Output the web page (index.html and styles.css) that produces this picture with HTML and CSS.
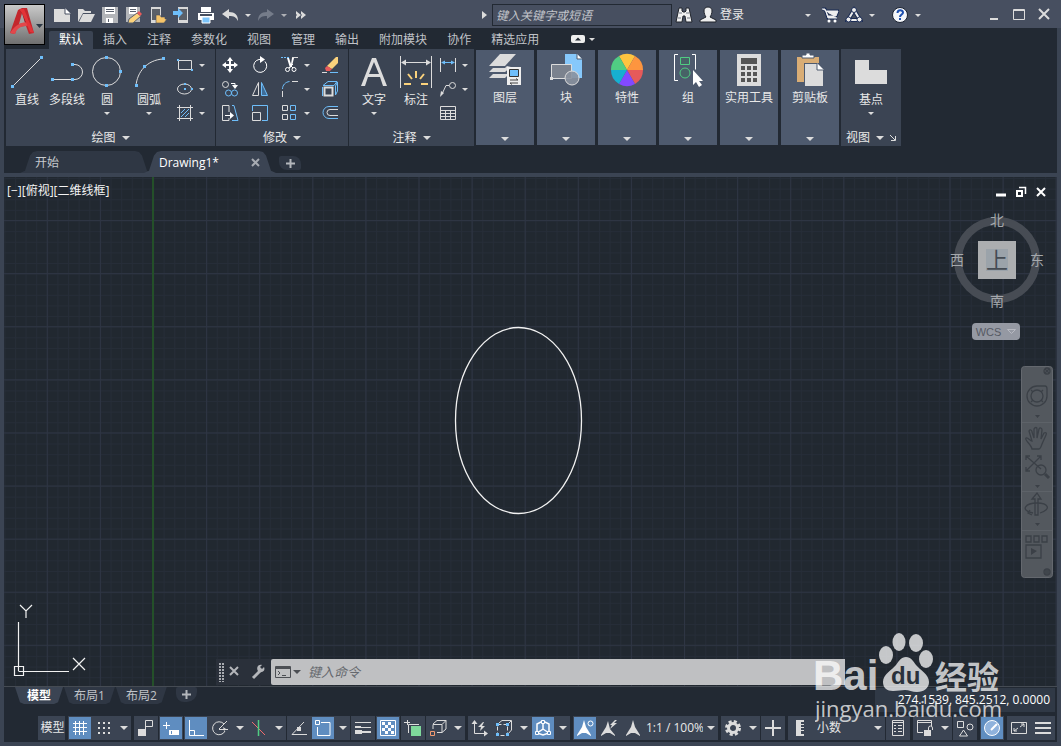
FILE: index.html
```html
<!DOCTYPE html>
<html lang="zh-CN">
<head>
<meta charset="utf-8">
<title>Drawing1</title>
<link rel="stylesheet" href="styles.css">
</head>
<body>
<div class="app">
  <header class="titlebar">
    <button class="app-btn" aria-label="应用程序菜单">
      <svg width="38" height="38" viewBox="0 0 38 38"><path d="M4 27 12 4l4-2h5l7 25-5 1-3-8-9 1-2 7z" fill="#c3272d"/><path d="m13 4 3 3-3 13 10-3 4 10-5-15z" fill="#8f171c"/><path d="m16 7 3 10-6 1z" fill="#a5a5a5"/><path d="M4 27C9 19 15 16 23 16l1 4c-8-1-13 2-15 8z" fill="#e2474b"/><path d="M13 3h5l5 12 5 12-4-1-8-19z" fill="#e23338"/><path d="M30 18h7l-3.500 4z" fill="#2c3744"/></svg>
    </button>
    <nav class="quick" aria-label="快速访问">
      <button aria-label="新建"><svg width="18" height="18"><path class="fl" d="M1 3h11l5 5v8H1z"/><path d="M12 2v6h6" fill="#fff" stroke="#474f60"/></svg></button>
      <button aria-label="打开"><svg width="18" height="18"><path class="fl" d="M1 16V3h5l2 2h6v2H6z"/><path class="fl" d="M6 8h12l-4 8H2z"/></svg></button>
      <button aria-label="保存"><svg width="18" height="18"><path d="M1 1h16v16H1z" fill="#b3b5b9"/><path fill="#fff" d="M4 1h10v7H4zM5 12h7v5H5z"/><path d="M5 3.500h8M5 5.500h8M7.500 13v3" stroke="#59606d"/></svg></button>
      <button aria-label="另存为"><svg width="18" height="18"><path d="M1 1h14v15H1z" fill="#b3b5b9"/><path fill="#fff" d="M4 1h8v7H4z"/><path d="M5 3.500h6M5 5.500h6" stroke="#59606d"/><path d="m3 17 1-4 8-6 4 3-8 7z" fill="#fbd27c" stroke="#59606d"/><path d="m12 7 2-2 3 3-2 2z" fill="#e95b5b"/></svg></button>
      <button aria-label="从移动设备打开"><svg width="18" height="18"><path d="M2 1h10v16H2z" fill="#d8d8d8"/><path d="M3 3h8v11H3z" fill="#5b6068"/><path d="M7 17V9h4l1 2h4v2h2l-3 4z" fill="#f6c469" stroke="#474f60" stroke-width=".6"/></svg></button>
      <button aria-label="保存到移动设备"><svg width="18" height="18"><path d="M5 1h10v16H5z" fill="#d8d8d8"/><path d="M6 3h8v11H6z" fill="#5b6068"/><path d="M0 5h5V2l5 5-5 5V9H0z" fill="#6ebefa"/></svg></button>
      <button aria-label="打印"><svg width="18" height="18"><path d="M4 1h10v5H4z" fill="#fff"/><path d="M1 7h16v7H1z" fill="#fff"/><path d="M3 9h12" stroke="#474f60" stroke-width="2"/><path d="M5 11h8v6H5z" fill="#7cc4fb" stroke="#fff"/></svg></button>
      <button aria-label="放弃"><svg width="18" height="18"><path class="fl" d="M1 8l7-5v3c6 0 9 3 9 9-2-4-4-5-9-5v3z"/></svg></button>
      <button class="slim" aria-label="放弃列表"><i class="arrow sm"></i></button>
      <button aria-label="重做"><svg width="18" height="18"><path fill="#757c8a" d="M17 8l-7-5v3C4 6 1 9 1 15c2-4 4-5 9-5v3z"/></svg></button>
      <button class="slim dim" aria-label="重做列表"><i class="arrow sm"></i></button>
      <button aria-label="更多"><svg width="18" height="18"><path d="M3 5l5 4-5 4v-3l1-1-1-1zM8 5l5 4-5 4v-3l1-1-1-1z" class="fl"/></svg></button>
    </nav>
    <form class="search">
      <svg width="8" height="10"><path class="fl" d="M2 1l5 4-5 4z"/></svg>
      <input type="text" placeholder="键入关键字或短语" aria-label="键入关键字或短语">
      <button type="button" aria-label="搜索"><svg width="18" height="18"><path d="M4 2h3v3l1 1h2l1-1V2h3l3 14h-6l-1-6H8l-1 6H1z" fill="#f0f0f0" stroke="#20242c"/><path d="M4 7h3M11 7h3M3 12h3M12 12h3" stroke="#737984"/></svg></button>
    </form>
    <div class="account">
      <button class="login"><svg width="18" height="18"><path d="M9 1c3 0 4 2 4 4s-1 5-2 6l6 3v2H1v-2l6-3C6 10 5 7 5 5s1-4 4-4z" fill="#eee" stroke="#20242c"/></svg><span>登录</span><i class="arrow sm"></i></button>
      <button aria-label="商店"><svg width="18" height="18"><path d="M1 3h3l3 9h9M5 5h12l-2 5H7" fill="#eee" stroke="#1b2c55" stroke-width="3"/><path d="M1 3h3l3 9h9M5 5h12l-2 5H7z" fill="#eee" stroke="#eee"/><circle cx="8" cy="15" r="1.500" fill="#fff"/><circle cx="14" cy="15" r="1.500" fill="#fff"/></svg></button>
      <button aria-label="应用商店"><svg width="18" height="18"><path d="M9 4 3 14h12z" fill="none" stroke="#1b2c55" stroke-width="4"/><path d="M9 4 3 14h12z" fill="none" stroke="#eee" stroke-width="2"/><g fill="#eee" stroke="#1b2c55"><circle cx="9" cy="4" r="2.500"/><circle cx="3.500" cy="13.500" r="2.500"/><circle cx="14.500" cy="13.500" r="2.500"/></g></svg></button>
      <button class="slim" aria-label="应用列表"><i class="arrow sm"></i></button>
      <button aria-label="帮助" class="help"><svg width="18" height="18"><circle cx="9" cy="9" r="7.500" fill="#f4f6fa" stroke="#1b2230"/><path d="M6.500 7c0-3.500 5.500-3.500 5.500-.5C12 8.500 9 8.500 9 11M9 12v2" stroke="#1d4fae" stroke-width="2" fill="none"/></svg></button>
      <button class="slim" aria-label="帮助列表"><i class="arrow sm"></i></button>
    </div>
    <div class="winbtns">
      <button aria-label="最小化"><svg width="16" height="16"><path d="M4 12h8" stroke="#dcdcdc" stroke-width="2"/></svg></button>
      <button aria-label="最大化"><svg width="16" height="16"><path d="M2.500 2.500h11v10h-11zM2 3.500h12" stroke="#dcdcdc" fill="none"/></svg></button>
      <button aria-label="关闭"><svg width="16" height="16"><path d="m3 2 10 10M13 2 3 12" stroke="#dcdcdc" stroke-width="2"/></svg></button>
    </div>
  </header>

  <nav class="ribbon-tabs" aria-label="功能区">
    <button class="on">默认</button><button>插入</button><button>注释</button><button>参数化</button><button>视图</button><button>管理</button><button>输出</button><button>附加模块</button><button>协作</button><button>精选应用</button>
    <button class="fold" aria-label="最小化功能区"><svg width="14" height="8"><rect width="14" height="8" rx="2" fill="#eee"/><path d="m4 5.500 3-3 3 3z" fill="#222933"/></svg><i class="arrow sm"></i></button>
  </nav>

  <section class="ribbon">
    <div class="panel">
      <div class="tools draw">
        <button class="big"><svg width="32" height="32"><path class="l" d="M2 30 30 2"/><path class="fb" d="M0 29h3v3H0zM29 0h3v3h-3z"/></svg><span>直线</span></button>
        <button class="big poly"><svg width="32" height="32"><path class="l" d="M2 23.500h19M21 8.500h3a7 7 0 0 1 0 15h-3"/><path class="fb" d="M0 22h3v3H0zM20 22h3v3h-3zM20 7h3v3h-3z"/></svg><span>多段线</span></button>
        <button class="big"><svg width="32" height="32"><circle class="l" cx="15.500" cy="15.500" r="14"/><path class="fb" d="M14 0h3v3h-3zM14 28h3v3h-3zM28 14h3v3h-3z"/></svg><span>圆</span><i class="arrow sm"></i></button>
        <button class="big"><svg width="32" height="32"><path class="l" d="M3 30C4 16 14 4 30 3"/><path class="fb" d="M2 28h3v3H2zM10 9h3v3h-3zM29 1h3v3h-3z"/></svg><span>圆弧</span><i class="arrow sm"></i></button>
        <div class="col">
          <button class="small" aria-label="矩形"><svg width="18" height="18"><path class="l" d="M2.500 4.500h13v9h-13z"/><path class="fb" d="M1 3h2v2H1zM15 13h2v2h-2z"/></svg><i class="arrow sm"></i></button>
          <button class="small" aria-label="椭圆"><svg width="18" height="18"><ellipse class="l" cx="8.500" cy="9" rx="7" ry="5"/><path class="fb" d="M8 3h2v2H8zM8 8h2v2H8zM15 8h2v2h-2z"/></svg><i class="arrow sm"></i></button>
          <button class="small" aria-label="图案填充"><svg width="18" height="18"><path class="l" d="M3.500 1v16M14.500 1v16M1 3.500h16M1 14.500h16"/><path class="b" d="m5 9 4-4M5 13l8-8M9 13l4-4"/></svg><i class="arrow sm"></i></button>
        </div>
      </div>
      <button class="ptitle">绘图<i class="arrow"></i></button>
    </div>
    <div class="panel">
      <div class="tools modify">
        <button aria-label="移动"><svg width="18" height="18"><path d="M9 3v12M3 9h12" stroke="#fff" stroke-width="2"/><path fill="#fff" d="m9 1 3 4H6zM9 17l3-4H6zM1 9l4-3v6zM17 9l-4-3v6z"/></svg></button>
        <button aria-label="旋转"><svg width="18" height="18"><path class="w" d="M14 5.500a6.500 6.500 0 1 1-6-2h2"/><path fill="#fff" d="m9 0 5 3.500L9 7z"/></svg></button>
        <button aria-label="修剪"><svg width="18" height="18"><path class="b" stroke-dasharray="2 1" d="M0 1.500h9"/><path class="l" d="M11 1.500h6"/><path fill="#fff" d="M6 2h2l2 6 1-6h2l-2 8-2 2z"/><circle class="w" cx="6.500" cy="13.500" r="2"/><circle class="w" cx="13" cy="13.500" r="2"/><path class="w" d="m8 12 4-4M9 9l3 3"/></svg></button>
        <button class="dd" aria-label="修剪列表"><i class="arrow sm"></i></button>
        <button aria-label="删除"><svg width="18" height="18"><path fill="#fbd27c" d="M17 1v6l-6 6-5-3 9-9z"/><path fill="#e95b5b" d="m6 10 5 3-2 2H5l-1-3z"/><path class="l" d="M1 16.500h5"/><path class="b" d="M9 16.500h8"/></svg></button>
        <button aria-label="复制"><svg width="18" height="18"><circle class="l" cx="4.500" cy="4.500" r="3"/><circle class="b" cx="7.500" cy="13" r="3"/><circle class="b" cx="13.500" cy="13" r="3"/><path class="w" d="M10 3.500h4V6"/><path fill="#fff" d="M11 5h6l-3 4z"/></svg></button>
        <button aria-label="镜像"><svg width="18" height="18"><path class="l" d="M1.500 15.500h6v-13z"/><path d="M10.500 15.500h6l-6-13z" fill="#3f6d98" stroke="#6ebefa"/></svg></button>
        <button aria-label="圆角"><svg width="18" height="18"><path class="b" d="M1.500 9c0-4 3-7 7-7.500"/><path class="l" d="M11 1.500h6M1.500 11v6"/></svg></button>
        <button class="dd" aria-label="圆角列表"><i class="arrow sm"></i></button>
        <button aria-label="分解"><svg width="18" height="18"><path class="l" stroke-width="2" d="M3.500 7.500h8v8h-8z"/><path class="b" d="M2 5.500 7 1.500h9l-3 4zM14.500 6l2-4v9l-2 4zM1.500 7v9"/></svg></button>
        <button aria-label="拉伸"><svg width="18" height="18"><path class="l" d="M8 8V1.500H1.500v15H8V14"/><path class="b" d="M11 1.500h2l4 15h-6"/><path class="w" d="M4 11.500h6"/><path fill="#fff" d="m9 8 4 3.500L9 15z"/></svg></button>
        <button aria-label="缩放"><svg width="18" height="18"><path class="b" d="M1.500 7V1.500h15v15H11"/><path class="l" d="M1.500 8.500h8v8h-8z"/></svg></button>
        <button aria-label="阵列"><svg width="18" height="18"><path class="l" d="M1.500 1.500h5v5h-5zM1.500 10.500h5v5h-5z"/><path class="b" d="M9.500 1.500h5v5h-5zM9.500 10.500h5v5h-5z"/></svg></button>
        <button class="dd" aria-label="阵列列表"><i class="arrow sm"></i></button>
        <button aria-label="偏移"><svg width="18" height="18"><path class="b" d="M17 2.500H8a6 6 0 0 0 0 12h9"/><path class="l" d="M17 5.500H9a3 3 0 0 0 0 6h8"/></svg></button>
      </div>
      <button class="ptitle">修改<i class="arrow"></i></button>
    </div>
    <div class="panel">
      <div class="tools note">
        <button class="big"><svg width="32" height="32"><path class="fl" fill-rule="evenodd" d="M3 30 14 2h4l11 28h-4l-3-9H10l-3 9zM11 18h10L16 6z"/></svg><span>文字</span><i class="arrow sm"></i></button>
        <button class="big"><svg width="32" height="32"><path class="l" d="M.5 0v32M31.500 0v32M2 6.500h28"/><path class="fl" d="m1 6.500 5-3v6zM31 6.500l-5-3v6z"/><path d="M16 15v7M8 18l4 5M24 18l-4 5M4 28h7M21 28h7" stroke="#fbd27c" stroke-width="2"/></svg><span>标注</span></button>
        <div class="col">
          <button class="small" aria-label="线性标注"><svg width="18" height="18"><path class="l" d="M1.500 2v14M16.500 2v14"/><path class="b" d="M3 6.500h12"/><path class="fb" d="m2 6.500 4-2v4zM16 6.500l-4-2v4z"/></svg><i class="arrow sm"></i></button>
          <button class="small" aria-label="引线"><svg width="18" height="18"><circle class="l" cx="13.500" cy="5.500" r="3"/><path class="l" d="M10 5.500H7L3 14"/><path class="fl" d="m1 17 1-6 3 2z"/></svg><i class="arrow sm"></i></button>
          <button class="small" aria-label="表格"><svg width="18" height="18"><path class="l" d="M1.500 2.500h15v13h-15zM1 6.500h16M1 9.500h16M1 12.500h16M6.500 6v10M11.500 6v10"/></svg></button>
        </div>
      </div>
      <button class="ptitle">注释<i class="arrow"></i></button>
    </div>
    <div class="blocks">
      <button class="block"><svg width="34" height="34"><g class="fl"><path d="M12 1h16L17 13H1z"/><path d="m5 15-4 4h16l6-5-4-1-2 2z"/><path d="m5 21-4 4h16l2-2v-2z"/></g><path d="M19 14h14v18H19z" fill="#eee"/><path d="M21.500 16.500h9v7h-9z" fill="#6ebefa" stroke="#333"/><path d="M22 27h8l-2-1.500M30 30h-8l2 1.500" stroke="#444" fill="none"/></svg><span>图层</span><i class="arrow"></i></button>
      <button class="block"><svg width="34" height="34"><path d="M16 1h12l5 5v19H16z" fill="#86c8fb"/><path d="M28 1v5h5" fill="#fff" stroke="#4e5a6e"/><path d="M2.500 11.500h20v14h-20z" fill="#7b828e" stroke="#dcdcdc"/><circle cx="23" cy="25" r="7" fill="#89919e" fill-opacity=".9" stroke="#dcdcdc"/><path class="fl" d="M1 24h3v3H1z"/></svg><span>块</span><i class="arrow"></i></button>
      <button class="block"><svg width="34" height="34" viewBox="-17 -17 34 34"><path d="M0 0-8-13.900A16 16 0 0 1 8-13.900z" fill="#fec440"/><path d="M0 0 8-13.900A16 16 0 0 1 16 0z" fill="#fd953f"/><path d="M0 0h16A16 16 0 0 1 8 13.900z" fill="#e65a5a"/><path d="m0 0 8 13.900A16 16 0 0 1-8 13.900z" fill="#8349ff"/><path d="m0 0-8 13.900A16 16 0 0 1-16 0z" fill="#16b0d1"/><path d="M0 0h-16A16 16 0 0 1-8-13.900z" fill="#50cd83"/></svg><span>特性</span><i class="arrow"></i></button>
      <button class="block"><svg width="34" height="34"><path class="w" d="M7 1.500H3.500v26H7M21 1.500h3.500v15"/><path d="M9.500 4.500h9v7h-9z" stroke="#50cd83" fill="#476266"/><circle cx="14" cy="20" r="5" stroke="#50cd83" fill="#476266"/><path d="M22 17v15l3-3 3 5 3-2-3-4h4z" fill="#fff"/></svg><span>组</span><i class="arrow"></i></button>
      <button class="block"><svg width="34" height="34"><path class="fl" d="M5 1h24v32H5z"/><path fill="#555" d="M9 5h16v6H9zM9 13h4v4H9zM15 13h4v4h-4zM21 13h4v4h-4zM9 19h4v4H9zM15 19h4v4h-4zM21 19h4v4h-4zM9 25h4v4H9zM15 25h4v4h-4zM21 25h4v4h-4z"/></svg><span>实用工具</span><i class="arrow"></i></button>
      <button class="block"><svg width="34" height="34"><path fill="#d9ad75" d="M4 4h22v6H11v19H4z"/><path d="M9 5V2h4V0h4v2h4v3z" fill="#fff" stroke="#4e5a6e"/><path class="fl" d="M12 11h12l6 6v16H12z"/><path d="M24 10v7h7" fill="#fff" stroke="#4e5a6e"/></svg><span>剪贴板</span><i class="arrow"></i></button>
    </div>
    <div class="panel">
      <div class="tools view">
        <button class="big"><svg width="32" height="32"><path class="fl" d="M0 4h14v10h18v14H0z"/></svg><span>基点</span><i class="arrow sm"></i></button>
      </div>
      <button class="ptitle">视图<i class="arrow"></i><svg width="6" height="6"><path d="m0 0 5 5M5.500 1v4.500H1" stroke="#dcdcdc" fill="none"/></svg></button>
    </div>
  </section>

  <nav class="doc-tabs" aria-label="图形">
    <button class="doc">开始</button>
    <button class="doc on">Drawing1*<svg width="10" height="10"><path d="m1 1 7 7M8 1 1 8" stroke="#a7abb2" stroke-width="2"/></svg></button>
    <button class="add" aria-label="新图形"><svg width="9" height="9"><path d="M4.500 0v9M0 4.500h9" stroke="#b4b7bc" stroke-width="2"/></svg></button>
  </nav>

  <main class="canvas">
    <svg class="grid" width="100%" height="100%">
      <defs>
        <pattern id="minor" x="149" y="43.500" width="10.620" height="10.620" patternUnits="userSpaceOnUse"><path d="M.5 0v10.620M0 .5h10.620" stroke="#262d38" fill="none"/></pattern>
        <pattern id="major" x="149" y="43" width="53.100" height="53.100" patternUnits="userSpaceOnUse"><path d="M.5 0v53.100M0 .5h53.100" stroke="#2e3543" fill="none"/></pattern>
      </defs>
      <rect width="100%" height="100%" fill="url(#minor)"/>
      <rect width="100%" height="100%" fill="url(#major)"/>
      <path d="M149 0v3000" stroke="#245029" stroke-width="2"/>
      <ellipse cx="514.500" cy="243.500" rx="63" ry="93" fill="none" stroke="#f2f2f2" stroke-width="1.300"/>
    </svg>
    <div class="vp-label">[−][俯视][二维线框]</div>
    <div class="vp-btns">
      <button aria-label="最小化视口"><svg width="12" height="12"><path d="M1 9h10" stroke="#fff" stroke-width="3"/></svg></button>
      <button aria-label="还原视口"><svg width="12" height="12"><path d="M2 5h5v5H2z" stroke="#fff" stroke-width="2" fill="none"/><path d="M4 1.500h6.500V8" stroke="#fff" stroke-width="1.500" fill="none"/></svg></button>
      <button aria-label="关闭视口"><svg width="12" height="12"><path d="m2 2 8 8M10 2l-8 8" stroke="#fff" stroke-width="2"/></svg></button>
    </div>
    <svg class="cube" width="110" height="110">
      <circle cx="55" cy="55" r="39" fill="none" stroke="#474c54" stroke-width="8"/>
      <path d="M36 36h38v38H36z" fill="#acaeb0"/><path d="M44 44h22v22H44z" fill="#9ba3aa"/>
      <g text-anchor="middle"><text x="55" y="63" class="top">上</text><text x="55" y="20">北</text><text x="55" y="101">南</text><text x="15" y="60">西</text><text x="95" y="60">东</text></g>
    </svg>
    <button class="wcs">WCS<svg width="9" height="6"><path d="M.5.5h8l-4 4z" fill="none" stroke="#b8bac2"/></svg></button>
    <svg class="navbar" width="32" height="212">
      <rect x=".5" y=".5" width="31" height="211" rx="3" fill="#53585e" stroke="#64686e"/>
      <path d="M1 56.500h30M1 125.500h30M1 164.500h30" stroke="#5d6268"/>
      <g fill="none" stroke="#3b4047" stroke-width="1.300">
        <circle cx="26" cy="5" r="3"/><path d="m24 3 4 4M28 3l-4 4"/><circle cx="26" cy="206" r="3"/><path d="M24 205h4M24 207h4"/>
        <path d="M16 20h8q2 0 2 3v7a10 10 0 1 1-10-10z"/><circle cx="16" cy="30" r="6"/><path d="m10 24 2 2M22 24l-2 2M10 36l2-2M22 36l-2-2"/>
        <path d="M11 83c-1-5-8-9-6-11 2-1 4 3 6 3L8 65c1-2 3-1 3 1l2 6V63c1-2 3-2 3 0v9l2-9c1-2 3-1 3 1l-1 9 3-6c2-1 3 0 2 2l-4 9c-1 3-2 5-3 5z"/>
        <path d="m5 90 15 13M20 90 5 105M5 94v-4h4M16 90h4v4M5 101v4h4"/><circle cx="20" cy="104" r="5"/><path d="m24 108 4 4" stroke-width="3"/>
        <path d="M14 149v-16h-3l5-6 4 6h-3v16z"/><path d="M12 147c-14-3-7-10 4-10s15 6 3 10"/><path d="m9 144-2 3 4 2"/>
        <path d="M5 170h5v6H5zM13 170h5v6h-5zM21 170h5v6h-5zM5 179h15v13H5z"/>
      </g>
      <path fill="#3b4047" d="M14 49h5l-2.500 3zM14 119h5l-2.500 3zM14 157h5l-2.500 3zM10 182l6 3-6 4z"/>
    </svg>
    <svg class="ucs" width="80" height="80">
      <path d="M9.500 66V17M9.500 66.500H60M5.500 61.500h9v9h-9zM64 53l12 12M76 53 64 65M11 0l6 6 6-6M17 6v7" fill="none" stroke="#f2f2f2" stroke-width="1.200"/>
    </svg>
    <div class="cmd">
      <svg width="55" height="26"><path d="M4 4v19M7 4v19" stroke="#a8abb0" stroke-width="2" stroke-dasharray="2 1"/><path d="m14 8 8 8M22 8l-8 8" stroke="#b4b6ba" stroke-width="2"/><path d="m37 19 8-8" stroke="#b4b6ba" stroke-width="3"/><path d="M48 8l-2 2-2-2 2-2c-4-1-6 3-4 6 3 3 8 0 6-4z" fill="#b4b6ba"/></svg>
      <label class="cmd-box"><svg width="28" height="14"><path d="M1.500 1.500h15v11h-15z" fill="none" stroke="#4c4f54"/><path d="M1 3h16" stroke="#4c4f54" stroke-width="2"/><path d="m4 6 2 2-2 2M8 10.500h4" fill="none" stroke="#4c4f54"/><path d="M19 5h8l-4 4z" fill="#4c4f54"/></svg><input type="text" placeholder="键入命令" aria-label="键入命令"></label>
    </div>
  </main>

  <section class="layouts">
    <div class="layout-tabs"><button class="on">模型</button><button>布局1</button><button>布局2</button><button class="add" aria-label="新建布局"><svg width="9" height="9"><path d="M4.500 0v9M0 4.500h9" stroke="#b4b7bc" stroke-width="2"/></svg></button></div>
    <output class="coords">274.1539, 845.2512, 0.0000</output>
  </section>

  <footer class="status">
    <div class="grp"><button class="txt model">模型</button></div>
    <div class="grp"><div class="seg">
      <button class="on" aria-label="栅格"><svg width="18" height="18"><path class="w" d="M4.500 2v14M8.500 2v14M12.500 2v14M2 4.500h14M2 8.500h14M2 12.500h14"/></svg></button>
      <button aria-label="捕捉"><svg width="18" height="18"><path class="l2" stroke-dasharray="2 3" d="M3 4h13M3 9h13M3 14h13"/></svg></button><button class="dd" aria-label="捕捉设置"><i class="arrow"></i></button></div></div>
    <div class="grp">
      <div class="seg"><button aria-label="推断约束"><svg width="18" height="18"><path class="l" d="M8.500 10V1.500h7v6h-7"/><path class="fl" d="M1 10h8v7H1z"/></svg></button></div>
      <div class="seg"><button class="on" aria-label="动态输入"><svg width="18" height="18"><path class="w" d="M1 6.500h7M4.500 3v7"/><path d="M7 11h10v5H7z" fill="#fff"/><path d="M9.500 12v3" stroke="#5f8dc0"/></svg></button></div>
      <div class="seg"><button class="on" aria-label="正交"><svg width="18" height="18"><path class="w" d="M2.500 1v15.500H17M2.500 11.500h5v5"/></svg></button>
      <button aria-label="极轴追踪"><svg width="18" height="18"><path class="l" d="M13 5a6.500 6.500 0 1 0 1 7M8 10.500h9M8 10l8-8"/><path class="fl" d="m12 8 1 4 2-2z"/></svg></button><button class="dd" aria-label="极轴设置"><i class="arrow"></i></button>
      <button aria-label="等轴测"><svg width="18" height="18"><path d="m2 3 13 13" stroke="#f06c6c"/><path d="M8.500 1v16" stroke="#50cd83" stroke-width="1.500"/></svg></button><button class="dd" aria-label="等轴测设置"><i class="arrow"></i></button></div>
      <div class="seg"><button aria-label="对象捕捉追踪"><svg width="18" height="18"><path class="l" d="M14 3 2 15.500h15"/><path class="fl" d="M7 8h4v4H7z"/></svg></button>
      <button class="on" aria-label="对象捕捉"><svg width="18" height="18"><path class="w" d="M1.500 1.500h4v4h-4zM7 3.500h9v13H3.500V8"/></svg></button><button class="dd" aria-label="对象捕捉设置"><i class="arrow"></i></button></div>
      <div class="seg"><button aria-label="线宽"><svg width="18" height="18"><path class="l" d="M1 3.500h16M7 8.500h10"/><path class="l2" d="M1 8h6M7 13h10"/><path class="fl" d="M1 11h7v4H1z"/></svg></button></div>
      <div class="seg"><button class="on" aria-label="透明度"><svg width="18" height="18"><path class="w" d="M1.500 1.500h15v15h-15z"/><path fill="#fff" d="M3 3h3v3H3zM9 3h3v3H9zM6 6h3v3H6zM12 6h3v3h-3zM3 9h3v3H3zM9 9h3v3H9zM6 12h3v3H6zM12 12h3v3h-3z"/></svg></button></div>
      <div class="seg"><button aria-label="选择循环"><svg width="18" height="18"><path class="l" d="M0 3.500h6M3.500 1v5M4.500 14V5.500H15"/><path d="M7 7h10v10H7z" fill="#7fd99c"/></svg></button></div>
      <div class="seg"><button aria-label="三维对象捕捉"><svg width="18" height="18"><path class="l" d="M4 10V5.500h9v8H8M4 5l4-3.500h9V10l-4 3.500M13 5.500l4-4"/><path d="M1.500 12.500h4v4h-4z" stroke="#f19a71" fill="none"/></svg></button><button class="dd" aria-label="三维捕捉设置"><i class="arrow"></i></button></div>
    </div>
    <div class="grp"><div class="seg">
      <button aria-label="动态 UCS"><svg width="18" height="18"><path class="l" d="M3.500 3v11.500H15"/><path class="fl" d="m3.500 1 3 4h-6zM17 14.500l-4-3v6zM12 3 7 8h3l-1 4 5-5h-3l2-4z"/></svg></button>
      <button aria-label="选择过滤"><svg width="18" height="18"><path class="l" stroke-dasharray="4 2" d="M2.500 5.500h10v11h-10z"/><path class="l" d="m4 4 3-2.500h9.500V11L13 15M13 5l3-3"/><path class="fb" d="M1 4h3v3H1zM11 4h3v3h-3zM1 14h3v3H1zM11 14h3v3h-3z"/></svg></button><button class="dd" aria-label="过滤设置"><i class="arrow"></i></button>
      <button class="on" aria-label="小控件"><svg width="18" height="18"><path class="w" stroke-width="1.500" d="M9 2 3 5v9l6 2 6-2V5zM9 4v6l-6 4M9 10l6 4"/><path d="M7.500 1.500h3v3h-3zM1.500 12.500h3v3h-3zM13.500 12.500h3v3h-3z" fill="#5f8dc0" stroke="#fff"/></svg></button><button class="dd" aria-label="小控件设置"><i class="arrow"></i></button></div></div>
    <div class="grp"><div class="seg">
      <button class="on" aria-label="注释可见性"><svg width="18" height="18"><path fill="#fff" d="M8 1 6 8l-5 8v1l5-3h4l5 3v-1l-5-8z"/><circle cx="14.500" cy="4.500" r="2.500" class="w"/></svg></button>
      <button aria-label="自动缩放"><svg width="18" height="18"><path class="fl" d="M8 2 6 8l-5 8v1l5-3h4l5 3v-1l-5-6zM15 1l-5 5h2l-2 4 7-6h-3l3-3z"/></svg></button>
      <button aria-label="注释比例"><svg width="18" height="18"><path class="fl" d="M9 1 7 8l-5 8v1l5-3h4l5 3v-1l-5-8z"/></svg></button>
      <button class="txt scale">1:1 / 100%</button><button class="dd" aria-label="比例列表"><i class="arrow"></i></button></div></div>
    <div class="grp">
      <div class="seg"><button aria-label="切换工作空间"><svg width="18" height="18"><circle cx="9" cy="9" r="4.500" fill="none" stroke="#dcdcdc" stroke-width="3"/><circle cx="9" cy="9" r="6.500" fill="none" stroke="#dcdcdc" stroke-width="3" stroke-dasharray="3 2.100"/></svg></button><button class="dd" aria-label="工作空间列表"><i class="arrow"></i></button></div>
      <div class="seg"><button aria-label="注释监视器"><svg width="18" height="18"><path class="l2" d="M9 1v16M1 9h16"/></svg></button></div>
    </div>
    <div class="grp">
      <div class="seg"><button aria-label="单位"><svg width="18" height="18"><path class="fl" d="M5 1h8v2h-3v2h3v1h-3v2h3v1h-3v2h3v1h-3v3h3v2H5z"/></svg></button><button class="txt unit">小数</button><button class="dd" aria-label="单位列表"><i class="arrow"></i></button></div>
      <div class="seg"><button aria-label="快捷特性"><svg width="18" height="18"><path class="l" d="M3.500 1.500h11v15h-11z"/><path class="l" d="M3 3.500h12M5 6.500h2M9 6.500h4M5 9.500h2M9 9.500h4M5 12.500h2M9 12.500h4"/></svg></button></div>
    </div>
    <div class="grp">
      <div class="seg"><button aria-label="锁定界面"><svg width="18" height="18"><path class="l" d="M7 13.500H1.500v-12h14V7M1 3.500h15"/><path class="fl" d="M8 11h7v6H8z"/><path class="l" d="M12.500 11V9a2 2 0 0 1 4 0v2"/></svg></button><button class="dd" aria-label="锁定列表"><i class="arrow"></i></button></div>
      <div class="seg"><button aria-label="隔离对象"><svg width="18" height="18"><path class="l" d="M1.500 2.500h6v6h-6zM7.500 11l4 6h-8z"/><circle class="l" cx="14" cy="8" r="3"/></svg></button></div>
    </div>
    <div class="grp"><div class="seg"><button class="on" aria-label="图形性能"><svg width="18" height="18"><circle cx="9" cy="9" r="7.500" fill="#8fb2dc" stroke="#fff"/><path d="m8 11 6-6" stroke="#fff" stroke-width="2"/></svg></button></div></div>
    <div class="grp"><div class="seg">
      <button aria-label="全屏显示"><svg width="18" height="18"><path class="l" d="M1.500 3.500h15v11h-15zM4 12l4-3M10 8l4-3M4 9v3h3M11 5h3v3"/></svg></button>
      <button aria-label="自定义"><svg width="18" height="18"><path class="l2" d="M1 4h16M1 9h16M1 14h16"/></svg></button></div></div>
  </footer>

  <svg class="brand" width="194" height="94">
    <g fill="#fff" fill-opacity=".74">
      <text x="-2" y="58" class="b1">Bai</text>
      <ellipse cx="71" cy="23" rx="7" ry="9"/><ellipse cx="84" cy="10" rx="6.500" ry="9"/><ellipse cx="101" cy="11" rx="7" ry="9"/><ellipse cx="111" cy="27" rx="7" ry="9"/>
      <path d="M91 25c-5 0-7 4-10 8-4 5-13 9-13 17 0 6 4 9 10 9 5 0 8-1 12-1s7 2 12 2c7 0 12-4 12-10 0-8-9-12-13-17-3-4-5-8-10-8z"/>
      <text x="120" y="57" class="b2">经验</text>
      <text x="0" y="85" class="b3">jingyan.baidu.com</text>
    </g>
    <text x="76" y="52" class="du">du</text>
  </svg>
</div>
</body>
</html>
```
FILE: styles.css
```css
:root {
  --frame: #3b4453;
  --title: #474f60;
  --dark: #222933;
  --block: #4e5a6e;
  --light: #dcdcdc;
  --blue: #6ebefa;
  --active: #5f8dc0;
}
* { box-sizing: border-box; }
body {
  margin: 0;
  font: 12px/16px "Open Sans", "Noto Sans CJK SC", sans-serif;
  color: #e8e8e8;
}
button, input {
  font: inherit;
  color: inherit;
  background: none;
  border: 0;
  padding: 0;
  margin: 0;
}
button {
  display: flex;
  align-items: center;
  justify-content: center;
  white-space: nowrap;
}
svg { flex: none; display: block; }

.l { stroke: var(--light); fill: none; }
.l2 { stroke: var(--light); stroke-width: 2; fill: none; }
.b { stroke: var(--blue); fill: none; }
.w { stroke: #fff; fill: none; }
.fl { fill: var(--light); }
.fb { fill: var(--blue); }

.arrow {
  flex: none;
  border: 4px solid transparent;
  border-top-color: var(--light);
  border-bottom-width: 0;
}
.arrow.sm { border-width: 3px 3px 0; }

.app {
  position: relative;
  display: flex;
  flex-direction: column;
  min-height: 100vh;
  padding: 0 4px 4px;
  background: var(--frame);
}

/* title bar */
.titlebar {
  display: flex;
  align-items: center;
  height: 28px;
  padding: 0 5px 0 50px;
  margin: 0 -4px;
  background: var(--title);
}
.app-btn {
  position: absolute;
  left: 4px;
  top: 4px;
  width: 41px;
  height: 41px;
  border: 1px solid #000;
  background: linear-gradient(#c9c9c9, #6f6f6f);
  z-index: 2;
}
.quick, .account, .winbtns, .search { display: flex; align-items: center; padding-top: 2px; }
.quick button, .search button, .account button, .winbtns button { width: 24px; height: 24px; }
.quick .slim, .account .slim { width: 12px; }
.quick .dim { opacity: .7; }
.search { margin-left: auto; gap: 4px; }
.search input {
  width: 180px;
  height: 22px;
  border: 1px solid #222933;
  padding: 0 3px;
  font-style: italic;
}
.search input::placeholder { color: #c2c5cb; opacity: 1; }
.search button { margin-left: -4px; }
.account .login {
  width: 118px;
  margin-right: 4px;
  padding-left: 3px;
  gap: 3px;
  justify-content: flex-start;
}
.login .arrow { margin-left: auto; margin-right: 3px; }
.account .help { margin-left: 10px; }
.winbtns { margin-left: 57px; }
.winbtns button { margin-left: 1px; }

/* ribbon */
.ribbon-tabs {
  display: flex;
  align-items: flex-end;
  height: 21px;
  padding-left: 45px;
  background: var(--dark);
  color: #c0c3c8;
}
.ribbon-tabs button { height: 18px; padding: 0 10px; }
.ribbon-tabs .on { background: var(--frame); color: #fff; border-radius: 2px 2px 0 0; }
.ribbon-tabs .fold { gap: 4px; margin-left: 12px; padding-bottom: 2px; }

.ribbon {
  display: flex;
  gap: 1px;
  height: 101px;
  padding: 0 0 4px 2px;
  background: var(--dark);
}
.panel {
  display: flex;
  flex-direction: column;
  justify-content: space-between;
  background: var(--frame);
}
.tools { display: flex; padding-top: 4px; }
.big {
  flex-direction: column;
  justify-content: flex-start;
  width: 42px;
  padding-top: 3px;
}
.big span { line-height: 24px; }
.big.poly { width: 38px; }
.col { display: flex; flex-direction: column; }
.small { height: 24px; gap: 5px; justify-content: flex-start; padding-left: 6px; }
.draw { padding-right: 10px; }
.note { padding: 4px 6px 0 4px; }
.note .small { padding-left: 2px; }
.modify {
  display: grid;
  grid-template-columns: 30px 30px 24px 16px 24px;
  grid-auto-rows: 24px;
  padding: 4px 6px 0 2px;
}
.modify button { width: 24px; }
.modify .dd { width: 10px; }
.ptitle { height: 18px; gap: 6px; padding-top: 2px; }
.blocks { display: flex; gap: 3px; padding: 1px; }
.block {
  flex-direction: column;
  justify-content: flex-start;
  width: 58px;
  padding: 3px 0 4px;
  background: var(--block);
}
.block span { line-height: 22px; }
.block .arrow { margin-top: auto; }
.view { justify-content: center; width: 60px; }

/* drawing tabs */
.doc-tabs {
  display: flex;
  align-items: flex-end;
  height: 27px;
  padding-left: 16px;
  background: var(--dark);
  border-bottom: 4px solid var(--frame);
}
.doc {
  width: 132px;
  height: 22px;
  padding: 2px 15px 0;
  justify-content: flex-start;
  background: #2f3744;
  color: #c6c9ce;
  clip-path: polygon(0 100%, 5px 90%, 10px 20%, 13px 4%, 17px 0, calc(100% - 17px) 0, calc(100% - 13px) 4%, calc(100% - 10px) 20%, calc(100% - 5px) 90%, 100% 100%);
}
.doc.on {
  justify-content: space-between;
  background: var(--frame);
  color: #fff;
  margin-left: -8px;
}
.doc-tabs .add {
  width: 22px;
  height: 14px;
  margin: 0 0 3px 3px;
  background: #2f3744;
  border-radius: 2px 8px 2px 8px;
}

/* drawing area */
.canvas {
  position: relative;
  flex: 1;
  min-height: 420px;
  background: #212830;
  overflow: hidden;
}
.grid { position: absolute; inset: 0; }
.vp-label { position: absolute; left: 3px; top: 6px; color: #f4f4f4; }
.vp-btns { position: absolute; right: 10px; top: 9px; display: flex; gap: 8px; }
.cube { position: absolute; right: 5px; top: 28px; font-size: 14px; fill: #a5a8ac; }
.cube .top { font-size: 22px; fill: #454c54; }
.wcs {
  position: absolute;
  right: 37px;
  top: 146px;
  width: 48px;
  height: 17px;
  gap: 6px;
  font: 11px "Liberation Sans", sans-serif;
  color: #555963;
  background: #9599a3;
  border-radius: 4px;
}
.navbar { position: absolute; right: 4px; top: 189px; }
.ucs { position: absolute; left: 5px; bottom: 1px; overflow: visible; }
.cmd {
  position: absolute;
  left: 212px;
  right: 212px;
  bottom: 1px;
  height: 26px;
  display: flex;
  background: #2a303a;
}
.cmd-box {
  flex: 1;
  display: flex;
  align-items: center;
  gap: 6px;
  padding-left: 3px;
  background: #bfc0c2;
  border-radius: 2px 0 0 2px;
}
.cmd-box input { flex: 1; font-size: 13px; font-style: italic; color: #333; }
.cmd-box input::placeholder { color: #66696e; opacity: 1; }

/* layout tabs and coordinates */
.layouts {
  display: flex;
  justify-content: space-between;
  height: 30px;
  padding-right: 2px;
  border-top: 1px solid #454b53;
  background: var(--dark);
}
.layout-tabs { display: flex; gap: 1px; padding-left: 11px; color: #c0c3c8; }
.layout-tabs button {
  height: 17px;
  padding: 1px 10px 0;
  background: #2f3744;
  clip-path: polygon(0 0, 100% 0, calc(100% - 5px) 90%, calc(100% - 9px) 100%, 9px 100%, 5px 90%);
}
.layout-tabs .on { padding: 1px 12px 0; background: var(--frame); color: #fff; font-weight: 600; }
.layout-tabs .add { margin-left: 8px; padding: 0 6px; height: 15px; clip-path: none; border-radius: 2px 2px 10px 8px; }
.coords {
  width: 180px;
  height: 24px;
  margin-top: 1px;
  padding-right: 5px;
  line-height: 24px;
  text-align: right;
  background: #303946;
  color: #fff;
}

/* status bar */
.status {
  display: flex;
  justify-content: flex-end;
  gap: 3px;
  padding: 0 2px 2px 0;
  background: var(--dark);
}
.grp { display: flex; gap: 1px; }
.seg { display: flex; background: var(--frame); }
.status button { width: 24px; height: 24px; background: var(--frame); }
.status .on { background: var(--active); border: 1px solid var(--frame); }
.status .dd { width: 15px; }
.status .model { width: 27px; padding: 0 0 0 2px; }
.status .scale { width: 58px; padding-left: 2px; }
.status .unit { width: 58px; padding-left: 5px; justify-content: flex-start; }

/* corner branding */
.brand { position: absolute; right: 52px; bottom: 20px; pointer-events: none; font-family: "Liberation Sans", "Noto Sans CJK SC", sans-serif; }
.b1 { font-size: 42px; font-weight: bold; }
.b2 { font-size: 32px; font-weight: bold; }
.b3 { font: 500 22px "Open Sans", sans-serif; }
.du { font-size: 24px; font-weight: bold; fill: #2a313b; }
```
